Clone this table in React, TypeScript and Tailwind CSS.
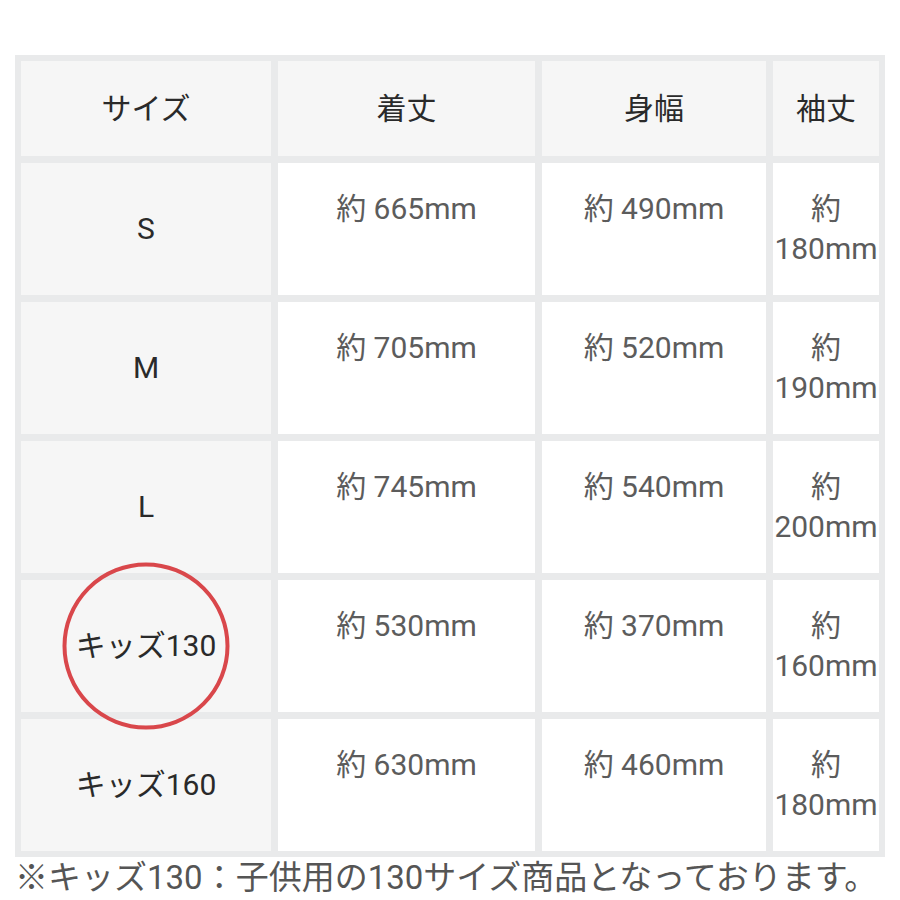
const font = { fontFamily: "Roboto, 'Noto Sans CJK JP', sans-serif" };

const rows = [
  { size: "S", length: "約 665mm", width: "約 490mm", sleeve: "180mm" },
  { size: "M", length: "約 705mm", width: "約 520mm", sleeve: "190mm" },
  { size: "L", length: "約 745mm", width: "約 540mm", sleeve: "200mm" },
  { size: "キッズ130", length: "約 530mm", width: "約 370mm", sleeve: "160mm", circled: true },
  { size: "キッズ160", length: "約 630mm", width: "約 460mm", sleeve: "180mm" },
];

export default function App() {
  return (
    <div className="w-[900px] h-[900px] bg-white pt-[55px] pl-[15px] overflow-hidden" style={font}>
      <div className="grid w-[870px] grid-cols-[250px_257px_224px_106px] gap-[7px] p-[6px] bg-[#e9eaeb] text-[30px] leading-[40px]">
        {["サイズ", "着丈", "身幅", "袖丈"].map((h) => (
          <div key={h} className="h-[95px] flex items-center justify-center bg-[#f6f6f6] text-[#2a2a2a]">
            {h}
          </div>
        ))}
        {rows.map((r) => (
          <div key={r.size} className="contents">
            <div className="relative h-[132px] flex items-center justify-center bg-[#f6f6f6] text-[#2a2a2a]">
              {r.size}
              {r.circled && (
                <div className="absolute z-10 left-1/2 top-1/2 -translate-x-1/2 -translate-y-1/2 w-[167px] h-[167px] rounded-full border-[4px] border-[#d9474b]" />
              )}
            </div>
            <div className="bg-white text-center text-[#5c5c5c] pt-[26px]">{r.length}</div>
            <div className="bg-white text-center text-[#5c5c5c] pt-[26px]">{r.width}</div>
            <div className="bg-white text-center text-[#5c5c5c] pt-[26px] whitespace-nowrap">
              約
              <br />
              {r.sleeve}
            </div>
          </div>
        ))}
      </div>
      <p className="mt-[1px] text-[33px] leading-[40px] text-[#555555] whitespace-nowrap">
        ※キッズ130：子供用の130サイズ商品となっております。
      </p>
    </div>
  );
}
